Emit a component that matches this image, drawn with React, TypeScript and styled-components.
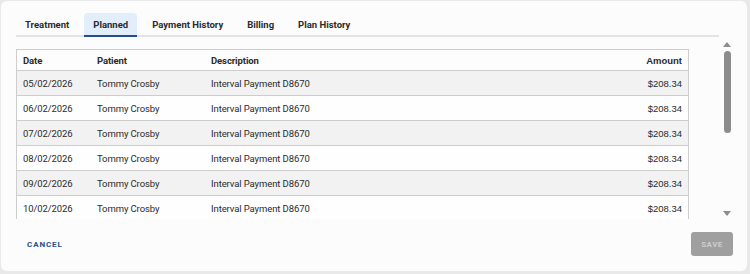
import styled, { createGlobalStyle } from 'styled-components'

const GlobalStyle = createGlobalStyle`
  html, body {
    margin: 0;
    padding: 0;
    background: #e9e9e9;
  }
  body {
    font-family: Roboto, 'Noto Sans', sans-serif;
    color: #2b2b2b;
  }
`

const tabs = ['Treatment', 'Planned', 'Payment History', 'Billing', 'Plan History']

const rows = ['05/02/2026', '06/02/2026', '07/02/2026', '08/02/2026', '09/02/2026', '10/02/2026']

export default function App() {
  return (
    <>
      <GlobalStyle />
      <Page>
        <Card>
          <TabBar>
            {tabs.map((t) => (
              <Tab key={t} $active={t === 'Planned'}>
                {t}
              </Tab>
            ))}
          </TabBar>
          <Body>
            <Viewport>
              <Table>
                <thead>
                  <tr>
                    <Th>Date</Th>
                    <Th>Patient</Th>
                    <Th>Description</Th>
                    <Th $right>Amount</Th>
                  </tr>
                </thead>
                <tbody>
                  {rows.map((d, i) => (
                    <Row key={d} $shaded={i % 2 === 0}>
                      <Td>{d}</Td>
                      <Td>Tommy Crosby</Td>
                      <Td>Interval Payment D8670</Td>
                      <Td $right>$208.34</Td>
                    </Row>
                  ))}
                </tbody>
              </Table>
            </Viewport>
            <Scrollbar>
              <svg width="8" height="5" viewBox="0 0 8 5">
                <path d="M4 0 L8 5 L0 5 Z" fill="#8c8c8c" />
              </svg>
              <Thumb />
              <Track />
              <svg width="8" height="5" viewBox="0 0 8 5">
                <path d="M0 0 L8 0 L4 5 Z" fill="#8c8c8c" />
              </svg>
            </Scrollbar>
          </Body>
          <Footer>
            <CancelButton>Cancel</CancelButton>
            <SaveButton disabled>Save</SaveButton>
          </Footer>
        </Card>
      </Page>
    </>
  )
}

const Page = styled.div`
  width: 750px;
  height: 274px;
  padding: 1px 3px 3px 1px;
  box-sizing: border-box;
`

const Card = styled.div`
  height: 100%;
  box-sizing: border-box;
  background: #fcfcfc;
  border-radius: 6px;
  padding: 12px 14px 0 15px;
  display: flex;
  flex-direction: column;
`

const TabBar = styled.div`
  display: flex;
  gap: 6px;
  width: 703px;
  border-bottom: 2px solid #e4e4e4;
`

const Tab = styled.div<{ $active?: boolean }>`
  height: 22px;
  padding: 0 9px;
  display: flex;
  align-items: center;
  font-size: 9.5px;
  font-weight: 700;
  color: #2b2b2b;
  border-radius: 4px 4px 0 0;
  margin-bottom: -2px;
  border-bottom: 2px solid ${(p) => (p.$active ? '#234f86' : 'transparent')};
  background: ${(p) => (p.$active ? '#e2eefb' : 'transparent')};
`

const Body = styled.div`
  display: flex;
  margin-top: 12px;
  height: 170px;
`

const Viewport = styled.div`
  width: 673px;
  height: 170px;
  overflow: hidden;
  border-left: 1px solid #cdcdcd;
  border-right: 1px solid #cdcdcd;
`

const Table = styled.table`
  width: 100%;
  border-collapse: collapse;
  font-size: 9.5px;
  letter-spacing: -0.1px;
  table-layout: fixed;

  th:nth-child(1) { width: 62px; }
  th:nth-child(2) { width: 102px; }
`

const amountFont = `
  font-family: 'Liberation Sans', Arial, sans-serif;
  letter-spacing: 0;
`

const Th = styled.th<{ $right?: boolean }>`
  height: 20px;
  padding: 0 6px;
  text-align: ${(p) => (p.$right ? 'right' : 'left')};
  font-weight: 700;
  background: #fdfdfd;
  border-top: 1px solid #cdcdcd;
  border-bottom: 1px solid #cdcdcd;
  ${(p) => (p.$right ? amountFont + 'font-size: 9.5px;' : '')}
`

const Row = styled.tr<{ $shaded?: boolean }>`
  background: ${(p) => (p.$shaded ? '#f2f2f2' : '#fefefe')};
  border-bottom: 1px solid #cdcdcd;
`

const Td = styled.td<{ $right?: boolean }>`
  height: 24px;
  padding: 0 6px;
  text-align: ${(p) => (p.$right ? 'right' : 'left')};
  white-space: nowrap;
  ${(p) => (p.$right ? amountFont + 'font-size: 9.5px;' : '')}
`

const Scrollbar = styled.div`
  width: 12px;
  height: 174px;
  margin-left: 32px;
  margin-top: -7px;
  display: flex;
  flex-direction: column;
  align-items: center;
`

const Thumb = styled.div`
  width: 7px;
  height: 82px;
  margin-top: 4px;
  border-radius: 4px;
  background: #8c8c8c;
`

const Track = styled.div`
  flex: 1;
`

const Footer = styled.div`
  display: flex;
  justify-content: space-between;
  align-items: center;
  padding: 0 0 0 11px;
  margin-top: 13px;
`

const CancelButton = styled.button`
  border: 0;
  background: none;
  padding: 0;
  font-family: Roboto, sans-serif;
  font-size: 8px;
  font-weight: 700;
  letter-spacing: 0.9px;
  text-transform: uppercase;
  color: #2a4f86;
`

const SaveButton = styled.button`
  width: 42px;
  height: 24px;
  border: 0;
  border-radius: 3px;
  background: #9f9f9f;
  color: #cdcdcd;
  font-family: Roboto, sans-serif;
  font-size: 8px;
  font-weight: 700;
  letter-spacing: 0.5px;
  text-transform: uppercase;
`
